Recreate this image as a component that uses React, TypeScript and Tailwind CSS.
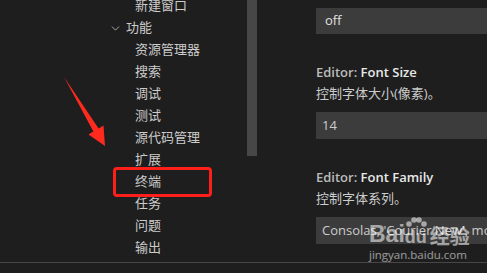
import { ChevronDown } from 'lucide-react';

const cjk = "font-['Segoe_UI','Open_Sans','Noto_Sans_CJK_SC',sans-serif]";

const features = ['资源管理器', '搜索', '调试', '测试', '源代码管理', '扩展', '终端', '任务', '问题', '输出'];

function TreeRow({ label, indent = 135 }: { label: string; indent?: number }) {
  return (
    <div className="h-[22px] flex items-center text-[13px] text-[#cccccc] whitespace-nowrap" style={{ paddingLeft: indent }}>
      {label}
    </div>
  );
}

function Setting({ name, desc, value }: { name: string; desc: string; value: string }) {
  return (
    <div className="flex flex-col">
      <div className="mt-[29px] h-[20px] flex items-center text-[13px] whitespace-nowrap">
        <span className="text-[#bbbbbb] font-semibold">Editor:&nbsp;</span>
        <span className="text-[#e8e8e8] font-semibold">{name}</span>
      </div>
      <div className="h-[22px] flex items-center text-[13px] text-[#cccccc] whitespace-nowrap">{desc}</div>
      <div className="mt-[7px] h-[27px] bg-[#3c3c3c] flex items-center pl-[6px] text-[13px] text-[#cccccc] whitespace-nowrap overflow-hidden">
        {value}
      </div>
    </div>
  );
}

export default function App() {
  return (
    <div className={`relative w-[487px] h-[273px] bg-[#1e1e1e] overflow-hidden flex flex-col ${cjk}`}>
      <div className="h-[262px] flex">
        {/* Tree */}
        <div className="w-[247px] flex flex-col mt-[-5px]">
          <TreeRow label="新建窗口" />
          <div className="h-[22px] flex items-center text-[13px] text-[#cccccc] pl-[109px] gap-[4px]">
            <ChevronDown size={13} strokeWidth={1.5} className="text-[#c5c5c5]" />
            <span>功能</span>
          </div>
          {features.map((f) => (
            <TreeRow key={f} label={f} />
          ))}
        </div>

        {/* Scrollbar */}
        <div className="w-[10px] flex flex-col">
          <div className="h-[156px] bg-[#474747]" />
        </div>

        {/* Settings */}
        <div className="flex-1 pl-[59px] flex flex-col min-w-0">
          <div className="mt-[8px] h-[26px] bg-[#3c3c3c] flex items-center pl-[9px] text-[13px] text-[#e0e0e0]">off</div>
          <Setting name="Font Size" desc="控制字体大小(像素)。" value="14" />
          <Setting name="Font Family" desc="控制字体系列。" value="Consolas, 'Courier New', monospace" />
        </div>
      </div>
      <div className="h-px bg-[#474747]" />
      <div className="flex-1 bg-[#1e1e1e]" />

      {/* Annotation: red arrow */}
      <svg className="absolute left-0 top-0 pointer-events-none" width="487" height="273">
        <polygon points="64,77 98.6,128.5 103.5,125.5 105,146 88.5,134.5 93.4,131.5" fill="#ff2a1e" />
      </svg>

      {/* Annotation: red box */}
      <div className="absolute left-[113px] top-[167px] w-[99px] h-[30px] border-[3px] border-[#ff1f1a] rounded-[4px]" />

      {/* Watermark */}
      <div className="absolute left-[369px] top-[217px] flex flex-col items-start text-white/55 pointer-events-none">
        <div className="flex items-end h-[29px] font-['Liberation_Sans',sans-serif] font-bold text-[23px] leading-none">
          <span>Bai</span>
          <span className="relative flex flex-col items-center">
            <svg width="22" height="12" viewBox="0 0 22 12" className="mb-[-1px]">
              <circle cx="4" cy="7" r="2.8" fill="currentColor" />
              <circle cx="9" cy="3" r="2.8" fill="currentColor" />
              <circle cx="14" cy="3" r="2.8" fill="currentColor" />
              <circle cx="19" cy="7" r="2.8" fill="currentColor" />
            </svg>
            <span className="text-[18px]">du</span>
          </span>
          <span className="ml-[3px] text-[20px] font-['Noto_Sans_CJK_SC',sans-serif] font-bold">经验</span>
        </div>
        <div className="mt-[3px] text-[11.5px] leading-none font-['Open_Sans',sans-serif]">jingyan.baidu.com</div>
      </div>
    </div>
  );
}
